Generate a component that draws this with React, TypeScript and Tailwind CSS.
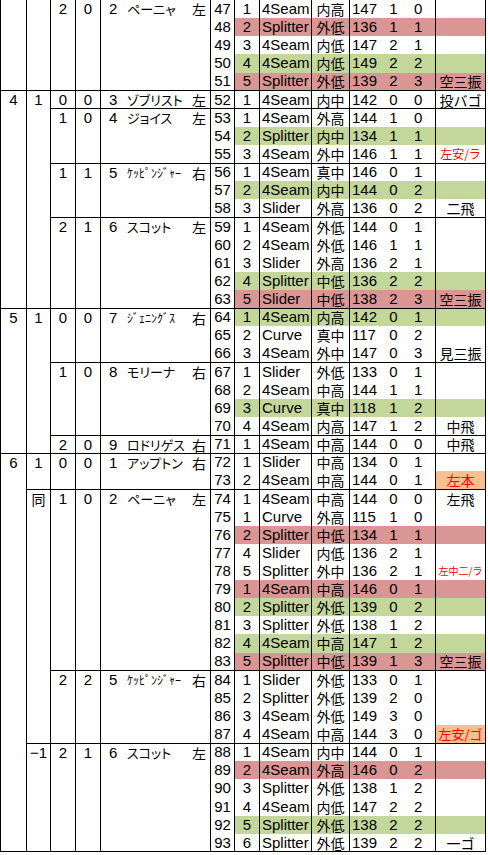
import React from "react";

type Tone = "" | "r" | "g";
type NoteKind = "" | "plain" | "red" | "redTiny" | "hr" | "hrSmall";

type Pitch = {
  n: number;
  c: number;
  type: string;
  loc: string;
  speed: number;
  b: number;
  s: number;
  tone: Tone;
  note: string;
  kind: NoteKind;
};

type Span = { label: string; span: number };

type Batter = {
  inning?: Span;
  out?: Span;
  c: string;
  d: string;
  no: string;
  name: string;
  narrow?: boolean;
  hand: string;
  pitches: Pitch[];
};

const p = (
  n: number,
  c: number,
  type: string,
  loc: string,
  speed: number,
  b: number,
  s: number,
  tone: Tone = "",
  note = "",
  kind: NoteKind = ""
): Pitch => ({ n, c, type, loc, speed, b, s, tone, note, kind: note && !kind ? "plain" : kind });

const batters: Batter[] = [
  {
    inning: { label: "", span: 5 },
    out: { label: "", span: 5 },
    c: "2",
    d: "0",
    no: "2",
    name: "ペーニャ",
    hand: "左",
    pitches: [
      p(47, 1, "4Seam", "内高", 147, 1, 0),
      p(48, 2, "Splitter", "外低", 136, 1, 1, "r"),
      p(49, 3, "4Seam", "内低", 147, 2, 1),
      p(50, 4, "4Seam", "内低", 149, 2, 2, "g"),
      p(51, 5, "Splitter", "外低", 139, 2, 3, "r", "空三振"),
    ],
  },
  {
    inning: { label: "4", span: 12 },
    out: { label: "1", span: 12 },
    c: "0",
    d: "0",
    no: "3",
    name: "ゾブリスト",
    hand: "左",
    pitches: [p(52, 1, "4Seam", "内中", 142, 0, 0, "", "投バゴ")],
  },
  {
    c: "1",
    d: "0",
    no: "4",
    name: "ジョイス",
    hand: "左",
    pitches: [
      p(53, 1, "4Seam", "外高", 144, 1, 0),
      p(54, 2, "Splitter", "内中", 134, 1, 1, "g"),
      p(55, 3, "4Seam", "外中", 146, 1, 1, "", "左安/ラ", "red"),
    ],
  },
  {
    c: "1",
    d: "1",
    no: "5",
    name: "ｹｯﾋﾟﾝｼﾞｬｰ",
    narrow: true,
    hand: "右",
    pitches: [
      p(56, 1, "4Seam", "真中", 146, 0, 1),
      p(57, 2, "4Seam", "内中", 144, 0, 2, "g"),
      p(58, 3, "Slider", "外高", 136, 0, 2, "", "二飛"),
    ],
  },
  {
    c: "2",
    d: "1",
    no: "6",
    name: "スコット",
    hand: "左",
    pitches: [
      p(59, 1, "4Seam", "外低", 144, 0, 1),
      p(60, 2, "4Seam", "外低", 146, 1, 1),
      p(61, 3, "Slider", "外高", 136, 2, 1),
      p(62, 4, "Splitter", "中低", 136, 2, 2, "g"),
      p(63, 5, "Slider", "中低", 138, 2, 3, "r", "空三振"),
    ],
  },
  {
    inning: { label: "5", span: 8 },
    out: { label: "1", span: 8 },
    c: "0",
    d: "0",
    no: "7",
    name: "ｼﾞｪﾆﾝｸﾞｽ",
    narrow: true,
    hand: "右",
    pitches: [
      p(64, 1, "4Seam", "内高", 142, 0, 1, "g"),
      p(65, 2, "Curve", "真中", 117, 0, 2),
      p(66, 3, "4Seam", "外中", 147, 0, 3, "", "見三振"),
    ],
  },
  {
    c: "1",
    d: "0",
    no: "8",
    name: "モリーナ",
    hand: "右",
    pitches: [
      p(67, 1, "Slider", "外低", 133, 0, 1),
      p(68, 2, "4Seam", "中高", 144, 1, 1),
      p(69, 3, "Curve", "真中", 118, 1, 2, "g"),
      p(70, 4, "4Seam", "内高", 147, 1, 2, "", "中飛"),
    ],
  },
  {
    c: "2",
    d: "0",
    no: "9",
    name: "ロドリゲス",
    hand: "右",
    pitches: [p(71, 1, "4Seam", "中高", 144, 0, 0, "", "中飛")],
  },
  {
    inning: { label: "6", span: 22 },
    out: { label: "1", span: 2 },
    c: "0",
    d: "0",
    no: "1",
    name: "アップトン",
    hand: "右",
    pitches: [
      p(72, 1, "Slider", "中高", 134, 0, 1),
      p(73, 2, "4Seam", "中高", 144, 0, 1, "", "左本", "hr"),
    ],
  },
  {
    out: { label: "同", span: 14 },
    c: "1",
    d: "0",
    no: "2",
    name: "ペーニャ",
    hand: "左",
    pitches: [
      p(74, 1, "4Seam", "中高", 144, 0, 0, "", "左飛"),
      p(75, 1, "Curve", "外高", 115, 1, 0),
      p(76, 2, "Splitter", "中低", 134, 1, 1, "r"),
      p(77, 4, "Slider", "内低", 136, 2, 1),
      p(78, 5, "Splitter", "外中", 136, 2, 1, "", "左中二/ラ", "redTiny"),
      p(79, 1, "4Seam", "中高", 146, 0, 1, "r"),
      p(80, 2, "Splitter", "外低", 139, 0, 2, "g"),
      p(81, 3, "Splitter", "外低", 138, 1, 2),
      p(82, 4, "4Seam", "中高", 147, 1, 2, "g"),
      p(83, 5, "Splitter", "中低", 139, 1, 3, "r", "空三振"),
    ],
  },
  {
    c: "2",
    d: "2",
    no: "5",
    name: "ｹｯﾋﾟﾝｼﾞｬｰ",
    narrow: true,
    hand: "右",
    pitches: [
      p(84, 1, "Slider", "外低", 133, 0, 1),
      p(85, 2, "Splitter", "外低", 139, 2, 0),
      p(86, 3, "4Seam", "外低", 149, 3, 0),
      p(87, 4, "4Seam", "中高", 144, 3, 0, "", "左安/ゴ", "hrSmall"),
    ],
  },
  {
    out: { label: "−1", span: 6 },
    c: "2",
    d: "1",
    no: "6",
    name: "スコット",
    hand: "左",
    pitches: [
      p(88, 1, "4Seam", "内中", 144, 0, 1),
      p(89, 2, "4Seam", "外高", 146, 0, 2, "r"),
      p(90, 3, "Splitter", "外低", 138, 1, 2),
      p(91, 4, "4Seam", "内低", 147, 2, 2),
      p(92, 5, "Splitter", "外低", 138, 2, 2, "g"),
      p(93, 6, "Splitter", "外低", 139, 2, 2, "", "一ゴ"),
    ],
  },
];

const toneBg: Record<Tone, string> = {
  "": "",
  r: "bg-[#da9694]",
  g: "bg-[#c4d79b]",
};

const noteClass: Record<NoteKind, string> = {
  "": "",
  plain: "text-[14px]",
  red: "text-[12px] text-[#ff0000]",
  redTiny: "text-[10px] text-[#ff0000]",
  hr: "bg-[#fabf8f] text-[14px] text-[#ff0000]",
  hrSmall: "bg-[#fabf8f] text-[13px] text-[#ff0000]",
};

const jp = "font-['Noto_Sans_CJK_JP',sans-serif]";
const spanCell = "p-0 align-top pt-[1px] text-center border-r border-b border-black";

function PitchRow({ batter, pitch, first, last }: { batter: Batter; pitch: Pitch; first: boolean; last: boolean }) {
  const rows = batter.pitches.length;
  const edge = last ? "border-b border-black" : "";
  const bg = toneBg[pitch.tone];
  const noteBg = pitch.kind === "hr" || pitch.kind === "hrSmall" ? "" : bg;

  return (
    <tr className="h-[18.13px]">
      {first && batter.inning && (
        <td rowSpan={batter.inning.span} className={`${spanCell} border-l`}>
          {batter.inning.label}
        </td>
      )}
      {first && batter.out && (
        <td rowSpan={batter.out.span} className={`${spanCell} ${batter.out.label === "同" ? `${jp} text-[14px]` : ""}`}>
          {batter.out.label}
        </td>
      )}
      {first && (
        <>
          <td rowSpan={rows} className={spanCell}>
            {batter.c}
          </td>
          <td rowSpan={rows} className={spanCell}>
            {batter.d}
          </td>
          <td rowSpan={rows} className="p-0 align-top pt-[1px] border-r border-b border-black">
            <div className="flex items-center whitespace-nowrap">
              <span className="w-[26px] shrink-0 pl-[8px]">{batter.no}</span>
              <span
                className={`flex-1 min-w-0 ${jp} [font-feature-settings:'palt'] ${
                  batter.narrow ? "text-[12px]" : "text-[13px]"
                }`}
              >
                {batter.name}
              </span>
              <span className={`shrink-0 pr-[4px] text-[14px] ${jp}`}>{batter.hand}</span>
            </div>
          </td>
        </>
      )}
      <td className={`p-0 text-center border-r border-black ${edge}`}>{pitch.n}</td>
      <td className={`p-0 text-center border-r border-black ${edge} ${bg}`}>{pitch.c}</td>
      <td className={`p-0 pl-[2px] border-r border-black ${edge} ${bg}`}>{pitch.type}</td>
      <td className={`p-0 text-center border-r border-black text-[14px] ${jp} ${edge} ${bg}`}>{pitch.loc}</td>
      <td className={`p-0 pl-[2px] ${edge} ${bg}`}>{pitch.speed}</td>
      <td className={`p-0 text-center ${edge} ${bg}`}>{pitch.b}</td>
      <td className={`p-0 text-center pr-[4px] border-r border-black ${edge} ${bg}`}>{pitch.s}</td>
      <td className={`p-0 text-center border-r border-black ${jp} ${edge} ${noteBg} ${noteClass[pitch.kind]}`}>
        {pitch.note}
      </td>
    </tr>
  );
}

export default function App() {
  return (
    <div className="w-[488px] h-[855px] bg-white overflow-hidden">
      <table className="w-[485px] table-fixed border-collapse text-[15px] leading-[16px] text-black font-['Liberation_Sans','Noto_Sans_CJK_JP',sans-serif]">
        <colgroup>
          <col className="w-[26px]" />
          <col className="w-[24px]" />
          <col className="w-[25px]" />
          <col className="w-[25px]" />
          <col className="w-[110px]" />
          <col className="w-[24px]" />
          <col className="w-[25px]" />
          <col className="w-[52px]" />
          <col className="w-[38px]" />
          <col className="w-[32px]" />
          <col className="w-[24px]" />
          <col className="w-[30px]" />
          <col className="w-[50px]" />
        </colgroup>
        <tbody>
          {batters.map((batter) =>
            batter.pitches.map((pitch, i) => (
              <PitchRow
                key={pitch.n}
                batter={batter}
                pitch={pitch}
                first={i === 0}
                last={i === batter.pitches.length - 1}
              />
            ))
          )}
        </tbody>
      </table>
    </div>
  );
}
